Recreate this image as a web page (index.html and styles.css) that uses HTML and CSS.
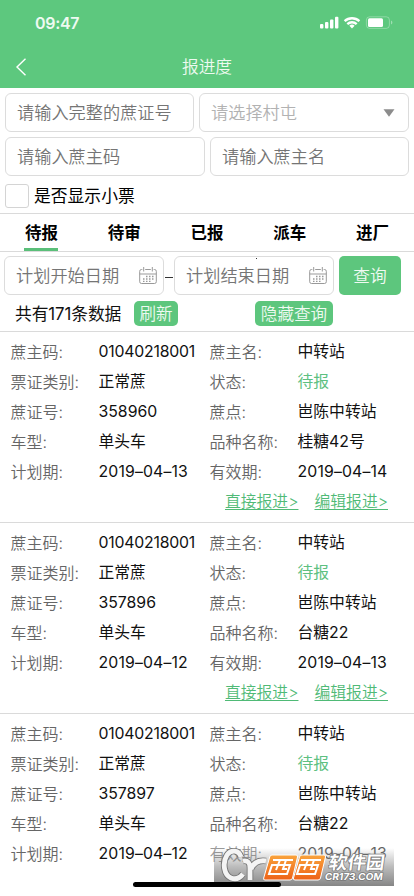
FILE: index.html
```html
<!DOCTYPE html>
<html lang="zh-CN">
<head>
<meta charset="utf-8">
<title>报进度</title>
<link rel="stylesheet" href="styles.css">
</head>
<body>
<div class="screen">
  <header class="top">
    <div class="status">
      <span class="time">09:47</span>
      <svg class="signals" width="74" height="14" viewBox="0 0 74 14">
        <g fill="#fff">
          <rect x="0" y="8" width="3.4" height="4.5" rx="1"/>
          <rect x="5" y="6" width="3.4" height="6.5" rx="1"/>
          <rect x="10" y="3.5" width="3.4" height="9" rx="1"/>
          <rect x="15" y="0.7" width="3.4" height="11.8" rx="1"/>
          <path d="M32 12.5l-2.6-2.7a3.8 3.8 0 0 1 5.2 0z"/>
          <rect x="48" y="2.3" width="15" height="8.6" rx="1.5"/>
        </g>
        <g fill="none" stroke="#fff" stroke-width="2.3">
          <path d="M24.6 5.2a10.7 10.7 0 0 1 14.8 0"/>
          <path d="M27.3 8.1a6.9 6.9 0 0 1 9.4 0"/>
        </g>
        <rect x="46.4" y="0.8" width="23" height="11.6" rx="3.2" fill="none" stroke="#fff" stroke-opacity=".3"/>
        <path d="M71 4.6v4q1.4-.6 1.4-2t-1.4-2z" fill="#fff" fill-opacity=".4"/>
      </svg>
    </div>
    <div class="nav">
      <svg class="back" width="12" height="18" viewBox="0 0 12 18"><path d="M10.500 .8L2 9l8.500 8.200" fill="none" stroke="#fff" stroke-width="1.4"/></svg>
      <h1 class="title">报进度</h1>
    </div>
  </header>

  <section class="filters">
    <div class="line line-a">
      <div class="field">请输入完整的蔗证号</div>
      <div class="field select">请选择村屯<svg width="12" height="8" viewBox="0 0 12 8"><path d="M.5.300h11L6 7.800z" fill="#8c8c8c"/></svg></div>
    </div>
    <div class="line line-b">
      <div class="field">请输入蔗主码</div>
      <div class="field">请输入蔗主名</div>
    </div>
    <div class="check"><span class="box"></span>是否显示小票</div>
  </section>

  <nav class="tabs">
    <span class="tab active">待报</span><span class="tab">待审</span><span class="tab">已报</span><span class="tab">派车</span><span class="tab">进厂</span>
  </nav>

  <section class="dates">
    <div class="field date">计划开始日期
      <svg width="18" height="19" viewBox="0 0 18 19"><g fill="none" stroke="#999"><path d="M3.300 3.500H2.500a1.800 1.800 0 0 0-1.800 1.800v10.400a1.800 1.800 0 0 0 1.800 1.800h13a1.800 1.800 0 0 0 1.800-1.800V5.300a1.800 1.800 0 0 0-1.800-1.800h-.8M6.200 3.500h5.600M4.700 1v4.500M13.300 1v4.500M.7 8h16.600"/><path d="M7 10.500h1.500M10 10.500h1.500M13 10.500h1.500M4 13h1.500M7 13h1.500M10 13h1.500M13 13h1.500M4 15.300h1.500M7 15.300h1.500M10 15.300h1.500" stroke-width="1.300"/></g></svg>
    </div>
    <span class="dash"></span>
    <div class="field date">计划结束日期
      <svg width="18" height="19" viewBox="0 0 18 19"><g fill="none" stroke="#999"><path d="M3.300 3.500H2.500a1.800 1.800 0 0 0-1.800 1.800v10.400a1.800 1.800 0 0 0 1.800 1.800h13a1.800 1.800 0 0 0 1.800-1.800V5.300a1.800 1.800 0 0 0-1.800-1.800h-.8M6.200 3.500h5.600M4.700 1v4.500M13.300 1v4.500M.7 8h16.600"/><path d="M7 10.500h1.500M10 10.500h1.500M13 10.500h1.500M4 13h1.500M7 13h1.500M10 13h1.500M13 13h1.500M4 15.300h1.500M7 15.300h1.500M10 15.300h1.500" stroke-width="1.300"/></g></svg>
      <i class="speck"></i>
    </div>
    <span class="query">查询</span>
  </section>

  <section class="summary">
    <span class="count">共有171条数据</span><span class="chip">刷新</span><span class="chip hide">隐藏查询</span>
  </section>

  <main>
    <article class="card">
      <dl class="grid">
        <dt>蔗主码:</dt><dd class="code">01040218001</dd><dt>蔗主名:</dt><dd>中转站</dd>
        <dt>票证类别:</dt><dd>正常蔗</dd><dt>状态:</dt><dd class="green">待报</dd>
        <dt>蔗证号:</dt><dd>358960</dd><dt>蔗点:</dt><dd>岜陈中转站</dd>
        <dt>车型:</dt><dd>单头车</dd><dt>品种名称:</dt><dd>桂糖42号</dd>
        <dt>计划期:</dt><dd class="day">2019–04–13</dd><dt>有效期:</dt><dd class="day">2019–04–14</dd>
      </dl>
      <div class="links"><a>直接报进&gt;</a><a>编辑报进&gt;</a></div>
    </article>
    <article class="card">
      <dl class="grid">
        <dt>蔗主码:</dt><dd class="code">01040218001</dd><dt>蔗主名:</dt><dd>中转站</dd>
        <dt>票证类别:</dt><dd>正常蔗</dd><dt>状态:</dt><dd class="green">待报</dd>
        <dt>蔗证号:</dt><dd>357896</dd><dt>蔗点:</dt><dd>岜陈中转站</dd>
        <dt>车型:</dt><dd>单头车</dd><dt>品种名称:</dt><dd>台糖22</dd>
        <dt>计划期:</dt><dd class="day">2019–04–12</dd><dt>有效期:</dt><dd class="day">2019–04–13</dd>
      </dl>
      <div class="links"><a>直接报进&gt;</a><a>编辑报进&gt;</a></div>
    </article>
    <article class="card">
      <dl class="grid">
        <dt>蔗主码:</dt><dd class="code">01040218001</dd><dt>蔗主名:</dt><dd>中转站</dd>
        <dt>票证类别:</dt><dd>正常蔗</dd><dt>状态:</dt><dd class="green">待报</dd>
        <dt>蔗证号:</dt><dd>357897</dd><dt>蔗点:</dt><dd>岜陈中转站</dd>
        <dt>车型:</dt><dd>单头车</dd><dt>品种名称:</dt><dd>台糖22</dd>
        <dt>计划期:</dt><dd class="day">2019–04–12</dd><dt class="faded">有效期:</dt><dd class="day faded">2019–04–13</dd>
      </dl>
    </article>
  </main>

  <svg class="watermark" width="180" height="38" viewBox="0 0 180 38">
    <defs>
      <linearGradient id="shade" x1="0" y1="0" x2="0" y2="1"><stop offset="0" stop-color="#777" stop-opacity="0"/><stop offset=".5" stop-color="#777" stop-opacity=".5"/><stop offset="1" stop-color="#707070" stop-opacity=".85"/></linearGradient>
      <linearGradient id="orange" x1="0" y1="0" x2="0" y2="1"><stop offset="0" stop-color="#f9a43c"/><stop offset="1" stop-color="#ee6218"/></linearGradient>
    </defs>
    <rect width="180" height="38" fill="url(#shade)"/>
    <g fill="none" stroke-linejoin="round">
      <g stroke="#777" stroke-width="6.600">
        <path d="M27 9C25 2 17 1 13 7c-5 8-3 20 4 23 5 2 9 0 12-4"/>
        <path d="M29 13c5-1 7 2 7 7v12M37 21c3-7 8-9 15-8"/>
      </g>
      <g stroke="#f4f4f4" stroke-width="4.800">
        <path d="M27 9C25 2 17 1 13 7c-5 8-3 20 4 23 5 2 9 0 12-4"/>
        <path d="M29 13c5-1 7 2 7 7v12M37 21c3-7 8-9 15-8"/>
      </g>
    </g>
    <g fill="url(#orange)" stroke="#fff" stroke-width="1">
      <path d="M58 7h24q2 0 1.500 2l-5 21q-.5 2-2.500 2H51q-2 0-1.300-2l6-21q.5-2 2.300-2z"/>
      <path d="M88 7h22q2 0 1.500 2l-5 21q-.5 2-2.500 2H81q-2 0-1.500-2l6-21q.5-2 2.500-2z"/>
    </g>
    <g fill="none" stroke="#fff" stroke-width="2">
      <path id="xi" d="M59 12h20M58 17h18l-3 9H55zM66 12l-4 10M72 12l-3 9h4"/>
      <use href="#xi" x="28"/>
    </g>
    <g class="wm-text">
      <text x="114" y="21.500" font-size="18" textLength="56" lengthAdjust="spacingAndGlyphs" transform="translate(3 0) skewX(-8)">软件园</text>
      <text class="site" x="111" y="32" font-size="9.500" textLength="58" lengthAdjust="spacingAndGlyphs" transform="translate(4 0) skewX(-8)">CR173.COM</text>
    </g>
  </svg>
  <div class="home"></div>
</div>
</body>
</html>
```
FILE: styles.css
```css
* { box-sizing: border-box; }
body {
  margin: 0;
  background: #fff;
  color: #111;
  font-family: Inter, "Noto Sans CJK SC", sans-serif;
  font-size: 16px;
}
.screen { position: relative; width: 414px; height: 896px; overflow: hidden; background: #fff; }
.top { height: 88px; background: #5dc87e; color: #fff; }
.status { height: 46px; padding: 0 20px 0 35px; display: flex; align-items: center; justify-content: space-between; }
.time { font-size: 16px; font-weight: 600; letter-spacing: -.3px; color: #eefaf1; }
.nav { height: 42px; display: grid; grid-template-columns: 40px 1fr 40px; align-items: center; }
.back { margin-left: 15px; }
.title { margin: 0; text-align: center; font-size: 16.700px; font-weight: 350; line-height: 24px; color: #edfaf0; }
.filters { padding: 5px 5px 0; height: 125px; }
.line { display: grid; height: 39px; }
.line-a { grid-template-columns: 189px 210px; gap: 5px; margin-bottom: 5px; }
.line-b { grid-template-columns: 200px 199px; gap: 5px; }
.field {
  position: relative;
  display: flex; align-items: center; justify-content: space-between;
  height: 39px; padding: 0 11px;
  border: 1px solid #dcdcdc; border-radius: 6px;
  color: #757575; font-size: 17.200px; font-weight: 350; line-height: 24px; white-space: nowrap;
}
.select { color: #b2b2b2; padding: 0 13px 0 11px; }
.check { display: flex; align-items: center; gap: 5px; margin-top: 7px; height: 25px; font-size: 16.800px; line-height: 24px; color: #000; }
.box { width: 24px; height: 24px; border: 1px solid #d4d4d4; border-radius: 3px; }
.tabs { display: grid; grid-template-columns: repeat(5, 1fr); height: 39px; border: solid #dadada; border-width: 1px 0; justify-items: center; }
.tab { width: 34px; line-height: 39px; height: 37px; font-size: 16.500px; font-weight: 600; color: #000; text-align: center; white-space: nowrap; }
.active { border-bottom: 3px solid #5abf79; }
.dates { display: flex; align-items: center; padding: 4px 0 0 4px; }
.date { width: 160px; padding: 0 6px 0 11px; }
.dash { width: 8px; height: 1.500px; margin: 4px 1px 0; background: #333; }
.speck { position: absolute; left: 81px; top: 1px; width: 1px; height: 1px; background: #333; }
.query { width: 62px; height: 39px; margin-left: 5px; border-radius: 5px; background: #5dc67d; color: #effaf2; font-size: 16.700px; font-weight: 350; line-height: 41px; text-align: center; }
.summary { height: 37px; padding: 6px 0 0 15px; display: flex; align-items: flex-start; border-bottom: 1px solid #dadada; }
.count { width: 119px; font-size: 16.800px; line-height: 26px; letter-spacing: -.1px; white-space: nowrap; }
.chip { width: 44px; height: 25px; border-radius: 5px; background: #5dc67d; color: #effaf2; font-size: 16.600px; font-weight: 350; line-height: 27px; text-align: center; white-space: nowrap; }
.hide { width: 78px; margin-left: 77px; }
.card { height: 191px; padding: 5px 0 0 10.500px; border-bottom: 1px solid #dadada; }
.card:last-child { border: 0; }
.grid { margin: 0; display: grid; grid-template-columns: 88px 111px 88px 1fr; grid-auto-rows: 30px; line-height: 30px; white-space: nowrap; }
dt { color: #666; font-size: 16px; font-weight: 350; }
dd { margin: 0; font-size: 15.800px; }
.code { letter-spacing: -.2px; }
.day { letter-spacing: .15px; }
.green { color: #5dc081; }
.links { display: flex; justify-content: flex-end; gap: 16px; padding-right: 26px; line-height: 30px; font-size: 15.800px; font-weight: 350; color: #4fba76; }
.links a { text-decoration: underline; text-underline-offset: 2px; text-decoration-thickness: 1px; }
.faded { opacity: .65; }
.watermark { position: absolute; left: 214px; top: 848px; }
.wm-text { font-family: "Noto Sans CJK SC", sans-serif; font-weight: 700; fill: #fff; stroke: #777; stroke-width: 1.400px; paint-order: stroke; }
.site { font-family: Inter, sans-serif; }
.home { position: absolute; left: 133px; top: 882px; width: 148px; height: 5px; border-radius: 3px; background: #000; }
```
